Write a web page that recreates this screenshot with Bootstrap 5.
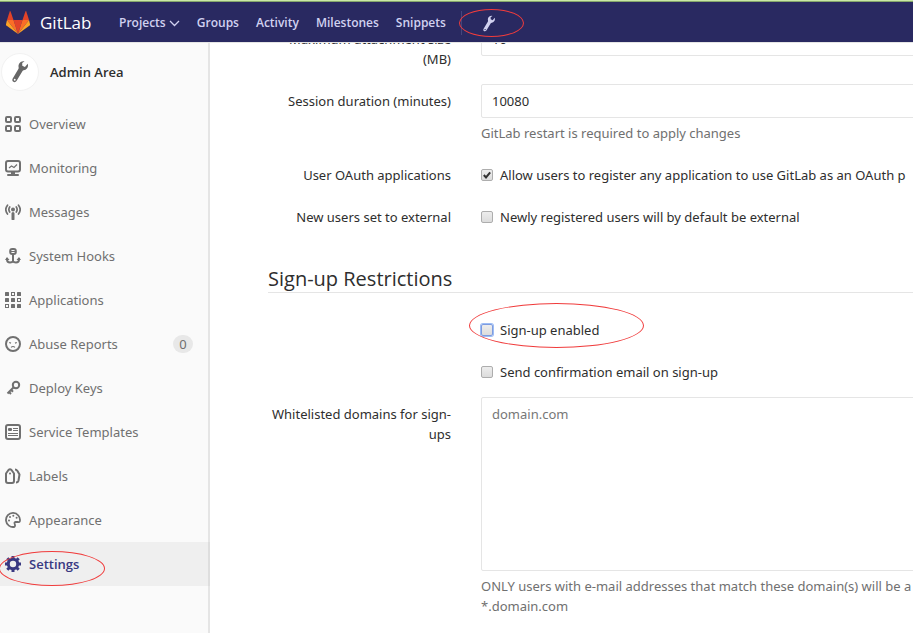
<!DOCTYPE html>
<html lang="en">
<head>
<meta charset="utf-8">
<meta name="viewport" content="width=device-width, initial-scale=1">
<title>Settings · Admin Area · GitLab</title>
<link href="https://cdn.jsdelivr.net/npm/bootstrap@5.3.0/dist/css/bootstrap.min.css" rel="stylesheet">
<style>
  body { font-family: "Noto Sans", "Open Sans", sans-serif; font-size: 13px; line-height: 20px; color: #2e2e2e; background: #fff; overflow: hidden; }
  .top-nav { height: 43px; padding-top: 3px; background: #292961; border-top: 1px solid #c9e8a6; border-bottom: 1px solid #e5e5e5; box-shadow: inset 0 1px #86a86c; z-index: 30; font-family: "Open Sans", sans-serif; }
  .top-nav a { color: #d1d1f0; font-size: 12px; font-weight: 600; text-decoration: none; }
  .top-nav .wordmark { color: #fff; font-size: 17px; font-weight: 500; width: 119px; gap: 8px; padding-left: 4px; }
  .nav-links { gap: 17px; }
  .wrench-link { border-left: 1px solid #45457c; width: 56px; height: 24px; margin-left: 15px; }
  .side-panel { width: 210px; background: #fafafa; border-right: 2px solid #e5e5e5; padding-top: 43px; z-index: 10; }
  .side-head { height: 59px; gap: 11px; padding: 0 0 2px 1px; font-family: "Open Sans", sans-serif; font-weight: 600; color: #2e2e2e; }
  .avatar-disc { width: 38px; height: 38px; border-radius: 50%; background: #fff; border: 1px solid #f2f2f2; color: #666; }
  .side-link { height: 44px; gap: 8px; padding: 0 15px 0 5px; color: #707070; text-decoration: none; }
  .side-link svg { width: 16px; height: 16px; flex: none; }
  .side-link.current { background: #efefef; color: #393982; font-family: "Open Sans", sans-serif; font-weight: 600; margin-right: -2px; border-right: 2px solid #dedede; }
  .count-pill { background: #e8e8e8; border-radius: 9px; width: 20px; height: 18px; line-height: 18px; }
  .content-area { padding: 22px 0 0 58px; }
  .form-line { margin-bottom: 15px; display: flex; gap: 30px; }
  .form-line > .name-col { width: 183px; padding-top: 7px; text-align: right; flex: none; }
  .form-line > .value-col { flex: 1 0 480px; white-space: nowrap; }
  .value-col .form-control { font-size: 13px; line-height: 20px; color: #2e2e2e; border: 1px solid #e5e5e5; border-radius: 2px; padding: 6px 10px; }
  .value-col textarea.form-control { height: 174px; resize: none; }
  .value-col .form-control::placeholder { color: #777; }
  .hint { color: #707070; margin-top: 5px; }
  .tick-row { padding-top: 7px; gap: 7px; }
  .tick-row input { appearance: none; width: 12px; height: 12px; margin: 0; border: 1px solid #adadad; border-radius: 2px; background: linear-gradient(#ededed, #dcdcdc); }
  .tick-row input:checked { background: url("data:image/svg+xml,%3Csvg xmlns='http://www.w3.org/2000/svg' viewBox='0 0 11 11'%3E%3Cpath d='M2 5.5l2.4 2.7L9 2.5' fill='none' stroke='%23333' stroke-width='2.2'/%3E%3C/svg%3E"), linear-gradient(#ededed, #dcdcdc); }
  .tick-row input.active-tick { border-color: #7d9be0; box-shadow: 0 0 0 1px #9dbdf5; }
  .section-title { font-family: "Open Sans", sans-serif; font-size: 20px; line-height: 27px; font-weight: 400; margin: 38px 0 20px; border-bottom: 1px solid #e5e5e5; }
  .ring { position: absolute; border: 1px solid #f03c3c; border-radius: 50%; pointer-events: none; }
  .ring-nav { left: -3px; top: -2px; width: 65px; height: 28px; }
  .ring-side { left: -1px; top: 9px; width: 106px; height: 35px; }
  .ring-signup { left: -12px; top: -10px; width: 175px; height: 45px; }
</style>
</head>
<body>
<svg width="0" height="0" class="position-absolute" aria-hidden="true"><symbol id="wrench" viewBox="0 0 18 24"><path fill="currentColor" d="M12.300 1.200C9 1.400 6.800 4.300 7.600 7.700c.1.600 0 1.200-.3 1.700L1.400 19.300c-.8 1.400-.4 2.800.7 3.500 1.200.7 2.600.2 3.400-1.100l6-10c.3-.5.8-.8 1.400-.9 2.700-.5 4.700-2.700 4.500-5.600l-.3-1.300-3 3.500-2.700-1.400-.1-3 2.500-1.700zM3.500 19.600a1 1 0 1 1 0 2 1 1 0 0 1 0-2z"/></symbol></svg>

<header class="top-nav fixed-top d-flex align-items-center">
  <a href="#" class="wordmark d-flex align-items-center">
    <svg width="28" height="26" viewBox="0 0 28 26" aria-hidden="true">
      <path fill="#e24329" d="M14 24L9.500 10h9z"/><path fill="#fc6d26" d="M14 24L9.500 10H3z"/><path fill="#fca326" d="M3 10l-1 4.200c-.1.500 0 .9.400 1.200L14 24z"/><path fill="#e24329" d="M3 10h6.500L6.600 1.500c-.2-.5-.7-.5-.9 0z"/><path fill="#fc6d26" d="M14 24l4.500-14H25z"/><path fill="#fca326" d="M25 10l1 4.200c.1.500 0 .9-.4 1.200L14 24z"/><path fill="#e24329" d="M25 10h-6.500l2.900-8.500c.2-.5.700-.5.900 0z"/>
    </svg>GitLab</a>
  <nav class="nav-links d-flex align-items-center" aria-label="Main">
    <a href="#">Projects <svg width="11" height="7" viewBox="0 0 11 7" fill="none" stroke="currentColor" stroke-width="1.300" aria-hidden="true"><path d="M1 1l4.500 4.500L10 1"/></svg></a>
    <a href="#">Groups</a><a href="#">Activity</a><a href="#">Milestones</a><a href="#">Snippets</a>
  </nav>
  <a href="#" class="wrench-link position-relative d-flex align-items-center justify-content-center" aria-label="Admin area">
    <svg width="14" height="17" viewBox="0 0 14 17" aria-hidden="true"><use href="#wrench"/></svg>
    <span class="ring ring-nav"></span>
  </a>
</header>

<div class="d-flex vh-100">
  <aside class="side-panel flex-shrink-0">
    <a href="#" class="side-head d-flex align-items-center text-decoration-none"><span class="avatar-disc d-flex align-items-center justify-content-center"><svg width="18" height="23" aria-hidden="true"><use href="#wrench"/></svg></span>Admin Area</a>
    <nav aria-label="Admin">
      <a href="#" class="side-link d-flex align-items-center">
        <svg viewBox="0 0 16 16" fill="none" stroke="currentColor" stroke-width="2" aria-hidden="true"><rect x="1" y="1" width="5" height="5" rx="1"/><rect x="10" y="1" width="5" height="5" rx="1"/><rect x="1" y="10" width="5" height="5" rx="1"/><rect x="10" y="10" width="5" height="5" rx="1"/></svg>Overview</a>
      <a href="#" class="side-link d-flex align-items-center">
        <svg viewBox="0 0 16 16" fill="none" stroke="currentColor" aria-hidden="true"><rect x="1" y="1" width="14" height="10.500" rx="2" stroke-width="2"/><path d="M4 8l2.500-2 2.500 1.500L12 4.500" stroke-width="1.200"/><path d="M8 12v2" stroke-width="4"/><path d="M3 15h10" stroke-width="2" stroke-linecap="round"/></svg>Monitoring</a>
      <a href="#" class="side-link d-flex align-items-center">
        <svg viewBox="0 0 16 16" fill="none" stroke="currentColor" stroke-width="1.700" stroke-linecap="round" aria-hidden="true"><circle cx="8" cy="5.500" r="2" fill="currentColor" stroke="none"/><path d="M8 9.500V15" stroke-width="3"/><path d="M4.700 3Q3 5.500 4.700 8M11.300 3Q13 5.500 11.300 8M2.500 1.200Q-.9 5.500 2.500 10M13.500 1.200Q16.900 5.500 13.500 10"/></svg>Messages</a>
      <a href="#" class="side-link d-flex align-items-center">
        <svg viewBox="0 0 16 16" fill="none" stroke="currentColor" stroke-width="2" aria-hidden="true"><rect x="5.200" y="1" width="5.600" height="5" rx="2"/><path d="M5 3.500h6" stroke-width="1"/><path d="M8 6v8.500M2 10v1.500Q2 14.500 5 14.500q2.500 0 3-1.500.5 1.500 3 1.500 3 0 3-3V10"/><path d="M0 12l2-3 2.500 3zM11.500 12L14 9l2 3z" fill="currentColor" stroke="none"/></svg>System Hooks</a>
      <a href="#" class="side-link d-flex align-items-center">
        <svg viewBox="0 0 16 16" fill="currentColor" aria-hidden="true"><rect width="4" height="4" rx=".5"/><rect x="12" width="4" height="4" rx=".5"/><rect y="6" width="4" height="4" rx=".5"/><rect x="6" y="6" width="4" height="4" rx=".5"/><rect x="6" y="12" width="4" height="4" rx=".5"/><rect x="12" y="12" width="4" height="4" rx=".5"/><g fill="none" stroke="currentColor"><rect x="6.500" y=".5" width="3" height="3"/><rect x="12.500" y="6.500" width="3" height="3"/><rect x=".5" y="12.500" width="3" height="3"/></g></svg>Applications</a>
      <a href="#" class="side-link d-flex align-items-center">
        <svg viewBox="0 0 16 16" fill="none" stroke="currentColor" aria-hidden="true"><circle cx="8" cy="8" r="7" stroke-width="2"/><path d="M6 11.300Q8 9.600 10 11.300" stroke-width="1.100"/><path d="M4.200 6.500l1.800.6M11.800 6.500l-1.800.6" stroke-width="1.300"/></svg>Abuse Reports<span class="count-pill ms-auto text-center">0</span></a>
      <a href="#" class="side-link d-flex align-items-center">
        <svg viewBox="0 0 16 16" fill="none" stroke="currentColor" stroke-width="2" aria-hidden="true"><circle cx="11" cy="5" r="3.200"/><path d="M8.700 7.300L2.500 13.500M4 12l2 2M6 9.800l2 2"/></svg>Deploy Keys</a>
      <a href="#" class="side-link d-flex align-items-center">
        <svg viewBox="0 0 16 16" fill="none" stroke="currentColor" aria-hidden="true"><rect x="1" y="1" width="14" height="14" rx="2" stroke-width="2"/><rect x="3" y="4" width="4" height="3" rx="1" fill="currentColor" stroke="none"/><path d="M8 4.500h5M8 6.500h5M3 9.500h10M3 11.500h10"/></svg>Service Templates</a>
      <a href="#" class="side-link d-flex align-items-center">
        <svg viewBox="0 0 16 16" fill="none" stroke="currentColor" stroke-width="2" stroke-linejoin="round" aria-hidden="true"><path d="M1 5.500L3.500 2Q5 .5 6.500 2L9 5.500V13q0 2-2 2H3q-2 0-2-2z"/><path d="M10 1.500q1.500 0 2.500 1.500l2 3.500-1 6q-.5 2-2.500 2"/><circle cx="5" cy="5.500" r="1" fill="currentColor" stroke="none"/></svg>Labels</a>
      <a href="#" class="side-link d-flex align-items-center">
        <svg viewBox="0 0 16 16" fill="none" stroke="currentColor" stroke-width="1.800" aria-hidden="true"><path d="M9.500 14.800A7 7 0 1 1 14.900 9q-.4 1.500-2 1H10.500q-1.500.3-.8 2 .8 2-.2 2.800z"/><g fill="currentColor" stroke="none"><circle cx="4" cy="8.500" r="1"/><circle cx="5" cy="5" r="1"/><circle cx="8.300" cy="3.800" r="1"/><circle cx="11.600" cy="5.700" r="1"/></g></svg>Appearance</a>
      <a href="#" class="side-link current position-relative d-flex align-items-center">
        <svg viewBox="0 0 16 16" fill="none" stroke="currentColor" aria-hidden="true"><circle cx="8" cy="8" r="4.700" stroke-width="3"/><path d="M8 0v3M8 13v3M0 8h3M13 8h3M2.300 2.300l2.200 2.200M11.500 11.500l2.200 2.200M2.300 13.700l2.200-2.200M11.500 4.500l2.200-2.200" stroke-width="3"/></svg>Settings<span class="ring ring-side"></span></a>
    </nav>
  </aside>

  <main class="content-area flex-grow-1 overflow-hidden">
    <form>
      <div class="form-line"><label class="name-col" for="attachment-size">Maximum attachment size (MB)</label><div class="value-col"><input id="attachment-size" type="text" class="form-control" value="10"></div></div>
      <div class="form-line"><label class="name-col" for="session-duration">Session duration (minutes)</label><div class="value-col"><input id="session-duration" type="text" class="form-control" value="10080"><div class="hint">GitLab restart is required to apply changes</div></div></div>
      <div class="form-line"><div class="name-col">User OAuth applications</div><div class="value-col"><label class="tick-row d-flex align-items-center"><input type="checkbox" checked>Allow users to register any application to use GitLab as an OAuth p</label></div></div>
      <div class="form-line"><div class="name-col">New users set to external</div><div class="value-col"><label class="tick-row d-flex align-items-center"><input type="checkbox">Newly registered users will by default be external</label></div></div>
      <h2 class="section-title">Sign-up Restrictions</h2>
      <div class="form-line"><div class="name-col"></div><div class="value-col position-relative"><label class="tick-row d-flex align-items-center"><input type="checkbox" class="active-tick">Sign-up enabled</label><span class="ring ring-signup"></span></div></div>
      <div class="form-line"><div class="name-col"></div><div class="value-col"><label class="tick-row d-flex align-items-center"><input type="checkbox">Send confirmation email on sign-up</label></div></div>
      <div class="form-line"><label class="name-col" for="domain-whitelist">Whitelisted domains for sign-ups</label><div class="value-col"><textarea id="domain-whitelist" class="form-control d-block" placeholder="domain.com"></textarea><div class="hint">ONLY users with e-mail addresses that match these domain(s) will be a<br>*.domain.com</div></div></div>
    </form>
  </main>
</div>
<script src="https://cdn.jsdelivr.net/npm/bootstrap@5.3.0/dist/js/bootstrap.bundle.min.js"></script>
</body>
</html>
